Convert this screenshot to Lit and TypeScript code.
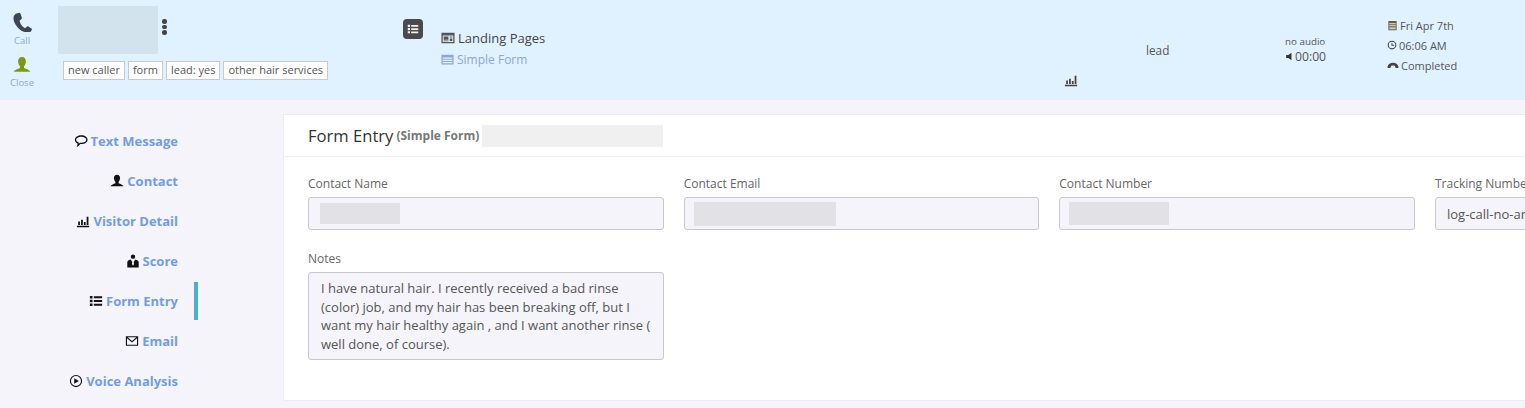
import { LitElement, css, html, svg } from 'lit';
import { customElement } from 'lit/decorators.js';

const icons: Record<string, any> = {
  phone: svg`<path d="M3 1.300 5.700.5c.5 0 .8.3 1 .7l1.200 3.400c.1.400 0 .8-.3 1L6 6.900c.7 2.700 2.300 4.800 4.500 6l1.500-1.300c.3-.3.700-.3 1.100-.1l2.500 1.600c.4.300.5.700.3 1.100l-.8 1.300c-.5.600-1.700 1-3 .9C7.800 16 4 12.400 2 8.500.7 5.700.9 2.700 3 1.300z"/>`,
  user: svg`<path d="M8 .8c2.200 0 3.500 1.700 3.500 3.900 0 1.700-.7 3.300-1.700 4.300v1.600c2 .9 4.800 1.700 5.600 3.400H.6c.8-1.700 3.600-2.500 5.600-3.400V9C5.200 8 4.500 6.400 4.500 4.700 4.500 2.500 5.800.8 8 .8z"/>`,
  bubble: svg`<path fill-rule="evenodd" d="M8.500 1.500c3.900 0 7 2.200 7 5s-3.100 5-7 5H7.200C6.100 13 4.800 14.200 3 14.800c.7-1 1-2.200 1-3.900C2.200 10 1 8.400 1 6.500c0-2.800 3.600-5 7.500-5zm0 1.500c-3.200 0-6 1.500-6 3.500 0 1.500 1.200 2.700 3 3.200 0 .6-.1 1.200-.2 1.600.6-.4 1-.9 1.300-1.300h1.900c3.200 0 5.500-1.500 5.500-3.500S11.700 3 8.500 3z"/>`,
  chart: svg`<path d="M1 13.500h14V15H1zM2.500 8.500h2v4h-2zM5.800 6.500h2v6h-2zM9 9h2v3.500H9zM12.200 3h2v9.500h-2z"/>`,
  score: svg`<path fill-rule="evenodd" d="M8 .5a2.500 2.500 0 1 1 0 5 2.500 2.500 0 0 1 0-5zM1.500 15.500V9.500c0-1.800 1.600-2.900 3.800-3.300L7.200 9 6.800 11.500 8 13.500l1.200-2L8.800 9l1.900-2.800c2.200.4 3.800 1.500 3.800 3.300v6z"/>`,
  list: svg`<path d="M1 2.300h3v2.900H1zM5.500 2.600H15v2.300H5.500zM1 6.600h3v2.900H1zM5.500 6.900H15v2.300H5.500zM1 10.900h3v2.900H1zM5.500 11.200H15v2.300H5.500z"/>`,
  mail: svg`<path fill-rule="evenodd" d="M1 2.500h14v11H1zm1.300 2.300v7.500h11.400V4.800L8 9.600zM3 3.700 8 8l5-4.300z"/>`,
  play: svg`<path fill-rule="evenodd" d="M8 1a7 7 0 1 1 0 14A7 7 0 0 1 8 1zm0 1.300a5.700 5.700 0 1 0 0 11.400A5.700 5.700 0 0 0 8 2.300zM6 4.800l5.200 3.200L6 11.200z"/>`,
  page: svg`<path fill-rule="evenodd" d="M.5 2h15v12H.5zM2 5v7.500h12V5zm1 1.200h5.500V10H3zm7 0h3v1.300h-3zm0 2.300h3v3h-3zM3 10.800h5.500v1H3z"/>`,
  form: svg`<path fill-rule="evenodd" d="M.5 2h15v12H.5zM2 5.500V7h12V5.500zm0 2.800v1.400h12V8.300zM2 11v1.500h12V11z"/>`,
  calendar: svg`<path fill-rule="evenodd" d="M2 1.500h12V15H2zm1.300 3.300v1.300h9.400V4.800zm0 2.500v1.200h9.400V7.300zm0 2.400v1.200h9.400V9.700zm0 2.400v1.500h9.400v-1.500z"/>`,
  clock: svg`<path fill-rule="evenodd" d="M8 1a7 7 0 1 1 0 14A7 7 0 0 1 8 1zm0 1.700a5.300 5.300 0 1 0 0 10.600A5.300 5.300 0 0 0 8 2.700zM7.200 4.500h1.400v3.200h2.800v1.400H7.200z"/>`,
  hangup: svg`<path d="M.5 10.500C1.500 6.700 4.500 5 8 5s6.500 1.700 7.500 5.500l-.7 1.500h-3.300L10.500 9.300C9.700 8.900 8.900 8.800 8 8.800s-1.700.1-2.500.5L4.500 12H1.200z"/>`,
  sound: svg`<path d="M2 5.500h4L11.500 1.500v13L6 10.500H2z"/>`,
};

const icon = (name: string, size: number, color: string) => html`<svg class="icon" width=${size} height=${size} viewBox="0 0 16 16" fill=${color}>${icons[name]}</svg>`;

const nav = [
  { name: 'bubble', label: 'Text Message' },
  { name: 'user', label: 'Contact' },
  { name: 'chart', label: 'Visitor Detail' },
  { name: 'score', label: 'Score' },
  { name: 'list', label: 'Form Entry', active: true },
  { name: 'mail', label: 'Email' },
  { name: 'play', label: 'Voice Analysis' },
];

@customElement('app-root')
export class AppRoot extends LitElement {
  static styles = css`
    :host {
      display: block;
      width: 1525px;
      height: 408px;
      overflow: hidden;
      background: #f4f4fa;
      font-family: "Open Sans", sans-serif;
      font-size: 12px;
      color: #555;
    }
    .icon { display: inline-block; flex: none; }
    .top {
      height: 100px;
      background: #e0f2ff;
      display: grid;
      grid-template-columns: 44px 359px 38px 624px 81px 139px 102px 1fr;
    }
    .actions { display: flex; flex-direction: column; align-items: center; padding-top: 12px; }
    .act { display: flex; flex-direction: column; align-items: center; height: 44px; font-size: 9.5px; color: #8ba6e0; line-height: 13px; }
    .act .icon { margin-bottom: 2px; }
    .who { padding: 6px 0 0 14px; }
    .who-top { display: flex; height: 48px; }
    .blur-name { width: 100px; height: 48px; background: #d2e3ee; }
    .kebab { display: flex; flex-direction: column; gap: 1px; margin-left: 4px; padding-top: 13px; }
    .kebab i { width: 4.5px; height: 4.5px; border-radius: 50%; background: #444; }
    .tags { display: flex; gap: 3px; margin: 7px 0 0 5px; }
    .tag { background: #fff; border: 1px solid #c9c9c9; height: 17px; line-height: 16px; padding: 0 4px; font-size: 11px; color: #555; white-space: nowrap; }
    .menu-col { padding-top: 19px; }
    .menu-btn { width: 20px; height: 20px; border-radius: 4px; background: #4a4a4a; display: flex; align-items: center; justify-content: center; }
    .pages { padding-top: 28px; }
    .crumb { display: flex; align-items: center; gap: 3px; height: 20px; font-size: 13px; color: #444; }
    .crumb.link { color: #8ba6e0; font-size: 12px; margin-top: 1px; }
    .chart-col { display: flex; align-items: flex-end; padding-bottom: 13px; }
    .chart-col .icon { margin-left: -1px; }
    .lead-col { padding-top: 43px; font-size: 11.8px; line-height: 14px; color: #555; }
    .audio { padding-top: 35px; white-space: nowrap; }
    .audio small { display: block; font-size: 9.8px; line-height: 14px; }
    .audio div { display: flex; align-items: center; font-size: 12.2px; gap: 1px; line-height: 15px; }
    .times { padding-top: 15px; font-size: 11px; color: #555; }
    .times div { display: flex; align-items: center; gap: 2px; height: 20px; white-space: nowrap; }

    .body { display: flex; height: 308px; }
    .side { width: 198px; padding-top: 21px; flex: none; }
    .nav { height: 40px; display: flex; align-items: center; justify-content: flex-end; gap: 3px; padding-right: 20px; font-size: 13px; font-weight: 700; color: #719ce6; white-space: nowrap; }
    .nav.active { height: 38px; margin: 1px 0; border-right: 4px solid #4eb0d1; padding-right: 16px; }
    .card {
      flex: 1;
      margin: 14px 0 7px 85px;
      background: #fff;
      border: 1px solid #ebebf2;
      border-right: 0;
      min-width: 0;
      overflow: hidden;
    }
    .head { height: 41px; border-bottom: 1px solid #f0f0f6; display: flex; align-items: center; padding-left: 24px; }
    .head h2 { margin: 0; font-size: 16.6px; font-weight: 400; color: #333; white-space: nowrap; }
    .head small { margin-left: 3px; font-size: 12px; font-weight: 700; color: #777; white-space: nowrap; }
    .head .blur { width: 181px; height: 22px; margin-left: 3px; background: #f0f0f0; }
    .form { padding: 20px 0 0 24px; display: grid; grid-template-columns: repeat(4, 355.67px); column-gap: 20px; row-gap: 22px; }
    .field { display: flex; flex-direction: column; }
    .field label { font-size: 12px; line-height: 14px; height: 20px; color: #666; white-space: nowrap; }
    .input {
      height: 33px;
      box-sizing: border-box;
      border: 1px solid #c8c8cc;
      border-radius: 3px;
      background: #f4f4fa;
      display: flex;
      align-items: center;
      padding-left: 11px;
      font-size: 13px;
      color: #555;
      white-space: nowrap;
      overflow: hidden;
    }
    .input .blur { background: #e1e1e6; }
    .blur.name { width: 80px; height: 21px; }
    .blur.email { width: 142px; height: 24px; margin-left: -2px; }
    .blur.number { width: 100px; height: 23px; margin-left: -2px; }
    .notes {
      box-sizing: border-box;
      height: 88px;
      border: 1px solid #c8c8cc;
      border-radius: 3px;
      background: #f4f4fa;
      padding: 6px 8px 6px 12px;
      font-size: 13px;
      line-height: 18.6px;
      color: #555;
    }
  `;

  render() {
    return html`
      <div class="top">
        <div class="actions">
          <div class="act">${icon('phone', 20, '#3f4650')}<span>Call</span></div>
          <div class="act">${icon('user', 18, '#7a9a12')}<span>Close</span></div>
        </div>
        <div class="who">
          <div class="who-top">
            <div class="blur-name"></div>
            <div class="kebab"><i></i><i></i><i></i></div>
          </div>
          <div class="tags">
            <span class="tag">new caller</span>
            <span class="tag">form</span>
            <span class="tag">lead: yes</span>
            <span class="tag">other hair services</span>
          </div>
        </div>
        <div class="menu-col">
          <div class="menu-btn">${icon('list', 12, '#f2f2f2')}</div>
        </div>
        <div class="pages">
          <div class="crumb">${icon('page', 14, '#555')}<span>Landing Pages</span></div>
          <div class="crumb link">${icon('form', 13, '#8ba6e0')}<span>Simple Form</span></div>
        </div>
        <div class="chart-col">${icon('chart', 14, '#4b4034')}</div>
        <div class="lead-col"><span>lead</span></div>
        <div class="audio">
          <small>no audio</small>
          <div>${icon('sound', 9, '#333')}<span>00:00</span></div>
        </div>
        <div class="times">
          <div>${icon('calendar', 11, '#6b5a3c')}<span>Fri Apr 7th</span></div>
          <div>${icon('clock', 10, '#444')}<span>06:06 AM</span></div>
          <div>${icon('hangup', 12, '#444')}<span>Completed</span></div>
        </div>
      </div>
      <div class="body">
        <div class="side">
          ${nav.map((n) => html`
            <div class="nav ${n.active ? 'active' : ''}">${icon(n.name, 14, '#111')}<span>${n.label}</span></div>
          `)}
        </div>
        <div class="card">
          <div class="head">
            <h2>Form Entry</h2>
            <small>(Simple Form)</small>
            <div class="blur"></div>
          </div>
          <div class="form">
            <div class="field"><label>Contact Name</label><div class="input"><div class="blur name"></div></div></div>
            <div class="field"><label>Contact Email</label><div class="input"><div class="blur email"></div></div></div>
            <div class="field"><label>Contact Number</label><div class="input"><div class="blur number"></div></div></div>
            <div class="field"><label>Tracking Number</label><div class="input">log-call-no-answer</div></div>
            <div class="field">
              <label>Notes</label>
              <div class="notes">I have natural hair. I recently received a bad rinse (color) job, and my hair has been breaking off, but I want my hair healthy again , and I want another rinse ( well done, of course).</div>
            </div>
          </div>
        </div>
      </div>
    `;
  }
}
